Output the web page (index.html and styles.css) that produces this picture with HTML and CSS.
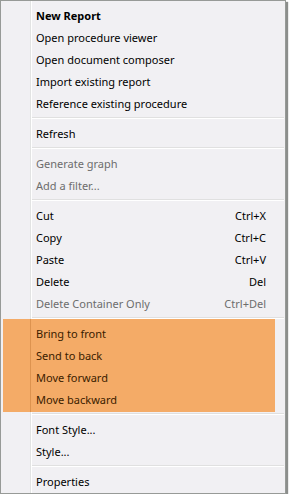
FILE: index.html
```html
<!DOCTYPE html>
<html>
<head>
<meta charset="utf-8">
<link rel="stylesheet" href="styles.css">
</head>
<body>
<div class="menu">
  <div class="item bold"><span>New Report</span></div>
  <div class="item"><span>Open procedure viewer</span></div>
  <div class="item"><span>Open document composer</span></div>
  <div class="item"><span>Import existing report</span></div>
  <div class="item"><span>Reference existing procedure</span></div>
  <div class="sep"></div>
  <div class="item"><span>Refresh</span></div>
  <div class="sep"></div>
  <div class="item disabled"><span>Generate graph</span></div>
  <div class="item disabled"><span>Add a filter...</span></div>
  <div class="sep"></div>
  <div class="item"><span>Cut</span><span class="key">Ctrl+X</span></div>
  <div class="item"><span>Copy</span><span class="key">Ctrl+C</span></div>
  <div class="item"><span>Paste</span><span class="key">Ctrl+V</span></div>
  <div class="item"><span>Delete</span><span class="key">Del</span></div>
  <div class="item disabled"><span>Delete Container Only</span><span class="key">Ctrl+Del</span></div>
  <div class="sep sep-before"></div>
  <div class="group">
    <div class="item"><span>Bring to front</span></div>
    <div class="item"><span>Send to back</span></div>
    <div class="item"><span>Move forward</span></div>
    <div class="item"><span>Move backward</span></div>
  </div>
  <div class="sep sep-after"></div>
  <div class="item"><span>Font Style...</span></div>
  <div class="item"><span>Style...</span></div>
  <div class="sep"></div>
  <div class="item"><span>Properties</span></div>
</div>
</body>
</html>
```
FILE: styles.css
```css
html, body {
  margin: 0;
  padding: 0;
  background: #ffffff;
}
body {
  font-family: "Noto Sans", "Open Sans", sans-serif;
  font-size: 11px;
  color: #000;
}
.menu {
  box-sizing: border-box;
  width: 286px;
  height: 494px;
  border: 1px solid #979a97;
  box-shadow: 2px 2px 1px #8c8e8c;
  padding: 3px 0 0 0;
  background:
    linear-gradient(to right, transparent 29px, #e2e3e3 29px, #e2e3e3 30px, #ffffff 30px, #ffffff 31px, transparent 31px),
    #f1f0f3;
  display: flex;
  flex-direction: column;
}
.item {
  flex: none;
  height: 22px;
  box-sizing: border-box;
  padding: 1px 19px 0 35px;
  display: flex;
  align-items: center;
  justify-content: space-between;
  white-space: nowrap;
}
.bold { font-weight: bold; }
.disabled { color: #6d6d6d; }
.key { text-align: right; }
.sep {
  flex: none;
  height: 8px;
  margin-left: 31px;
  margin-right: 1px;
  background: linear-gradient(to bottom, transparent 3px, #e0e0e0 3px, #e0e0e0 4px, #ffffff 4px, #ffffff 5px, transparent 5px);
}
.sep-before { height: 5px; }
.sep-after {
  height: 6px;
  background: linear-gradient(to bottom, transparent 1px, #e0e0e0 1px, #e0e0e0 2px, #ffffff 2px, #ffffff 3px, transparent 3px);
}
.group {
  flex: none;
  margin: 0 10px 0 2px;
  padding: 3px 0 2px 0;
  background:
    linear-gradient(to right, transparent 27px, #dd934f 27px, #dd934f 28px, transparent 28px),
    #f4ab67;
  color: #3a2000;
}
.group .item { padding-left: 33px; }
```
